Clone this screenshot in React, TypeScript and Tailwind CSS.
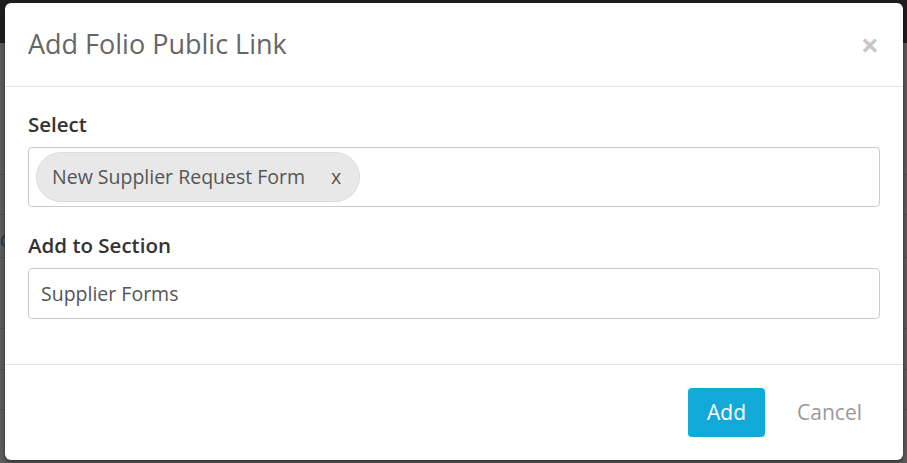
const font = { fontFamily: '"Open Sans", "Noto Sans", sans-serif' };

function Backdrop() {
  return (
    <div className="absolute inset-0 flex flex-col bg-[#5c5c5c]">
      <div className="h-[43px] bg-[#1e1e1e]" />
      <div className="relative flex-1">
        <div className="absolute left-0 top-[131px] h-px w-full bg-[#4f4f4f]" />
        <div className="absolute left-0 top-[171px] h-px w-full bg-[#4f4f4f]" />
        <div className="absolute left-0 top-[214px] h-px w-full bg-[#4f4f4f]" />
        <div className="absolute left-0 top-[285px] h-px w-full bg-[#4f4f4f]" />
        <div className="absolute left-0 top-[326px] h-px w-full bg-[#4f4f4f]" />
        <div className="absolute left-0 top-[366px] h-px w-full bg-[#4f4f4f]" />
        <div className="absolute left-0 top-[186px] text-[16px] text-[#1c2a40]">C</div>
      </div>
    </div>
  );
}

export default function App() {
  return (
    <div className="relative h-[463px] w-[907px] overflow-hidden" style={font}>
      <Backdrop />
      <div className="relative ml-[5px] mt-[3px] flex h-[457px] w-[898px] flex-col rounded-[6px] bg-white shadow-[0_2px_4px_rgba(0,0,0,0.5)]">
        <div className="flex h-[84px] items-center justify-between border-b border-[#e5e5e5] pl-[23px] pr-[24px]">
          <h1 className="text-[27px] text-[#666]">Add Folio Public Link</h1>
          <span className="text-[32px] font-bold leading-none text-[#c8c8c8]">×</span>
        </div>

        <div className="flex flex-1 flex-col border-b border-[#e5e5e5] px-[23px] pt-[23px]">
          <label className="mb-[9px] text-[20.5px] font-semibold leading-[28px] text-[#333]">Select</label>
          <div className="flex h-[60px] items-center rounded-[4px] border border-[#ccc] px-[7px]">
            <div className="flex h-[50px] items-center gap-[26px] rounded-full border border-[#dcdcdc] bg-[#e8e8e8] pl-[15px] pr-[18px] text-[19.5px] text-[#555]">
              <span>New Supplier Request Form</span>
              <span>x</span>
            </div>
          </div>

          <label className="mb-[9px] mt-[24px] text-[20.5px] font-semibold leading-[28px] text-[#333]">Add to Section</label>
          <div className="flex h-[51px] items-center rounded-[4px] border border-[#ccc] px-[12px] text-[19.5px] text-[#555]">
            Supplier Forms
          </div>
        </div>

        <div className="flex h-[95px] items-center justify-end gap-[32px] pr-[41px]">
          <button className="h-[49px] rounded-[4px] bg-[#12a9d8] px-[19px] text-[21px] text-white">Add</button>
          <button className="text-[21px] text-[#999]">Cancel</button>
        </div>
      </div>
    </div>
  );
}
